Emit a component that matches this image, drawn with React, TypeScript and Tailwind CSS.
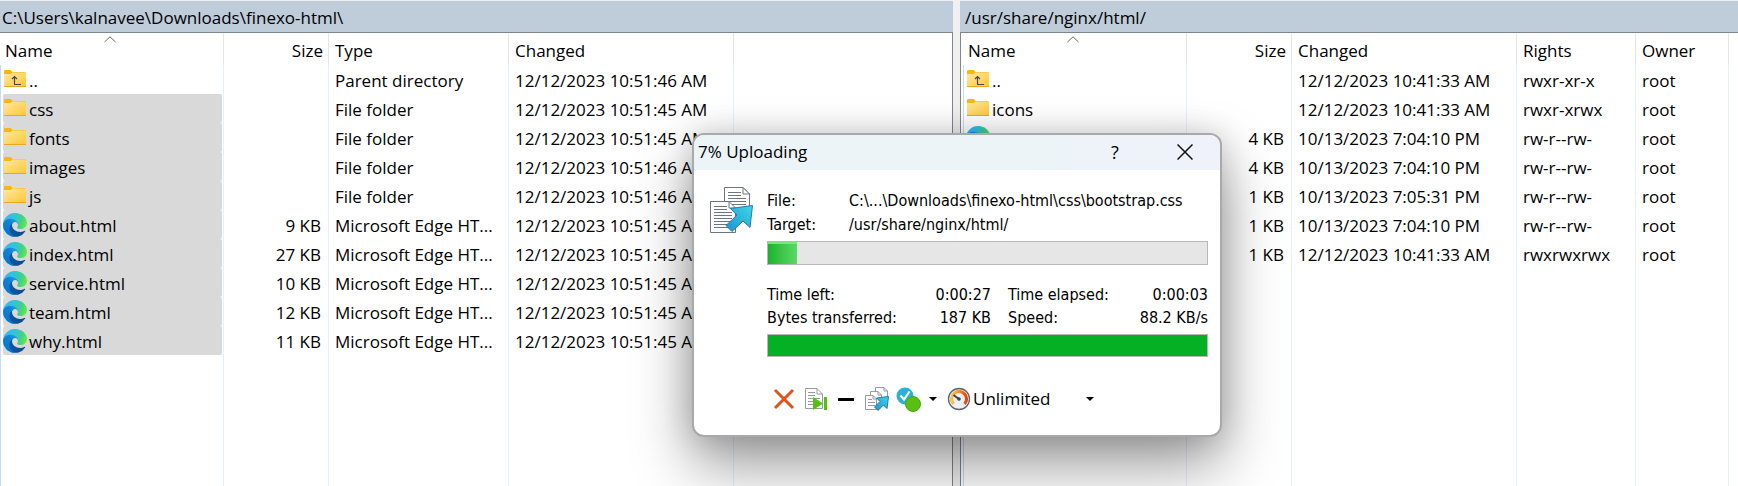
import React from "react";

type Kind = "up" | "folder" | "edge";
type Row = { kind?: Kind; name: string; selected?: boolean; cells: string[] };
type Column = { label: string; width: string; right?: boolean; sorted?: boolean };

const localColumns: Column[] = [
  { label: "Name", width: "w-[224px]", sorted: true },
  { label: "Size", width: "w-[105px]", right: true },
  { label: "Type", width: "w-[180px]" },
  { label: "Changed", width: "w-[225px]" },
];

const remoteColumns: Column[] = [
  { label: "Name", width: "w-[224px]", sorted: true },
  { label: "Size", width: "w-[105px]", right: true },
  { label: "Changed", width: "w-[225px]" },
  { label: "Rights", width: "w-[119px]" },
  { label: "Owner", width: "w-[93px]" },
];

const localRows: Row[] = [
  { kind: "up", name: "..", cells: ["", "Parent directory", "12/12/2023 10:51:46 AM"] },
  { kind: "folder", name: "css", selected: true, cells: ["", "File folder", "12/12/2023 10:51:45 AM"] },
  { kind: "folder", name: "fonts", selected: true, cells: ["", "File folder", "12/12/2023 10:51:45 AM"] },
  { kind: "folder", name: "images", selected: true, cells: ["", "File folder", "12/12/2023 10:51:46 AM"] },
  { kind: "folder", name: "js", selected: true, cells: ["", "File folder", "12/12/2023 10:51:46 AM"] },
  { kind: "edge", name: "about.html", selected: true, cells: ["9 KB", "Microsoft Edge HT...", "12/12/2023 10:51:45 AM"] },
  { kind: "edge", name: "index.html", selected: true, cells: ["27 KB", "Microsoft Edge HT...", "12/12/2023 10:51:45 AM"] },
  { kind: "edge", name: "service.html", selected: true, cells: ["10 KB", "Microsoft Edge HT...", "12/12/2023 10:51:45 AM"] },
  { kind: "edge", name: "team.html", selected: true, cells: ["12 KB", "Microsoft Edge HT...", "12/12/2023 10:51:45 AM"] },
  { kind: "edge", name: "why.html", selected: true, cells: ["11 KB", "Microsoft Edge HT...", "12/12/2023 10:51:45 AM"] },
];

const remoteRows: Row[] = [
  { kind: "up", name: "..", cells: ["", "12/12/2023 10:41:33 AM", "rwxr-xr-x", "root"] },
  { kind: "folder", name: "icons", cells: ["", "12/12/2023 10:41:33 AM", "rwxr-xrwx", "root"] },
  { kind: "edge", name: "50x.html", cells: ["4 KB", "10/13/2023 7:04:10 PM", "rw-r--rw-", "root"] },
  { name: "", cells: ["4 KB", "10/13/2023 7:04:10 PM", "rw-r--rw-", "root"] },
  { name: "", cells: ["1 KB", "10/13/2023 7:05:31 PM", "rw-r--rw-", "root"] },
  { name: "", cells: ["1 KB", "10/13/2023 7:04:10 PM", "rw-r--rw-", "root"] },
  { name: "", cells: ["1 KB", "12/12/2023 10:41:33 AM", "rwxrwxrwx", "root"] },
];

function Gradients() {
  return (
    <svg width="0" height="0" className="absolute" aria-hidden="true">
      <defs>
        <linearGradient id="folder" x1="0" y1="0" x2="1" y2="1">
          <stop offset="0" stopColor="#ffe9a6" />
          <stop offset="1" stopColor="#ffc62f" />
        </linearGradient>
        <linearGradient id="edgeDeep" x1="58" y1="177" x2="236" y2="177" gradientUnits="userSpaceOnUse">
          <stop offset="0" stopColor="#0c59a4" />
          <stop offset="1" stopColor="#114a8b" />
        </linearGradient>
        <linearGradient id="edgeBlue" x1="157" y1="94" x2="46" y2="222" gradientUnits="userSpaceOnUse">
          <stop offset="0" stopColor="#1b9de2" />
          <stop offset="0.3" stopColor="#1384d6" />
          <stop offset="1" stopColor="#0078d4" />
        </linearGradient>
        <linearGradient id="edgeTop" x1="20" y1="60" x2="250" y2="130" gradientUnits="userSpaceOnUse">
          <stop offset="0" stopColor="#35b8f0" />
          <stop offset="0.4" stopColor="#2fc5d8" />
          <stop offset="0.75" stopColor="#43d088" />
          <stop offset="1" stopColor="#66eb3c" />
        </linearGradient>
        <linearGradient id="arrow" x1="1" y1="0" x2="0" y2="1">
          <stop offset="0" stopColor="#3fd6e4" />
          <stop offset="1" stopColor="#1f93d2" />
        </linearGradient>
        <linearGradient id="dial" x1="0" y1="0" x2="1" y2="0">
          <stop offset="0" stopColor="#fdc34a" />
          <stop offset="0.5" stopColor="#f5922c" />
          <stop offset="1" stopColor="#e2470f" />
        </linearGradient>
      </defs>
    </svg>
  );
}

function FolderIcon({ up = false }: { up?: boolean }) {
  return (
    <svg width="24" height="24" viewBox="0 0 24 24" className="shrink-0" aria-hidden="true">
      <path d="M1 3.5C1 2.7 1.6 2 2.4 2H7.6L9.6 4H22.5V6H1Z" fill="#fbb615" />
      <path d="M1 6H7.6L9.6 4.6H23V19H1Z" fill="url(#folder)" />
      <path d="M1 18.5H23" stroke="#eba81c" />
      {up && <path d="M11.5 16.5V9M9 11L11.5 8.5L14 11M11 16.5H18" fill="none" stroke="#4a4a4a" strokeWidth="1.2" />}
    </svg>
  );
}

function EdgeIcon() {
  return (
    <svg width="24" height="24" viewBox="0 0 256 256" className="shrink-0" aria-hidden="true">
      <g transform="translate(-4.63 -4.92)">
        <path fill="url(#edgeDeep)" d="M235.68 195.46a93.73 93.73 0 0 1-10.54 4.71 101.87 101.87 0 0 1-35.9 6.46c-47.32 0-88.54-32.55-88.54-74.32A31.48 31.48 0 0 1 117.13 105c-42.8 1.8-53.8 46.4-53.8 72.53 0 73.88 68.09 81.37 82.76 81.37 7.91 0 19.84-2.3 27-4.56l1.31-.44a128.34 128.34 0 0 0 66.6-52.8 4 4 0 0 0-5.32-5.64z" />
        <path fill="url(#edgeBlue)" d="M110.34 246.34A79.2 79.2 0 0 1 87.6 225a80.72 80.72 0 0 1 29.53-120c3.12-1.47 8.45-4.13 15.54-4a32.35 32.35 0 0 1 25.69 13 31.88 31.88 0 0 1 6.36 18.66c0-.21 24.46-79.6-80-79.6-43.9 0-80 41.66-80 78.21a130.15 130.15 0 0 0 12.11 56 128 128 0 0 0 156.38 67.11 75.55 75.55 0 0 1-62.78-8z" />
        <path fill="url(#edgeTop)" d="M156.94 153.78c-.81 1.05-3.3 2.5-3.3 5.66 0 2.61 1.7 5.12 4.72 7.23 14.38 10 41.49 8.68 41.56 8.68a59.56 59.56 0 0 0 30.27-8.35 61.38 61.38 0 0 0 30.43-52.88c.26-22.41-8-37.31-11.34-43.91C228.09 28.76 182.35 4.92 132.61 4.92a128 128 0 0 0-128 126.2c.48-36.54 36.8-66.05 80-66.05 3.5 0 23.46.34 42 10.07 16.34 8.58 24.9 18.94 30.85 29.21 6.18 10.67 7.28 24.15 7.28 29.52s-2.74 13.33-7.8 19.91z" />
      </g>
    </svg>
  );
}

function RowIcon({ kind }: { kind: Kind }) {
  if (kind === "edge") return <EdgeIcon />;
  return <FolderIcon up={kind === "up"} />;
}

function FileTable({ label, columns, rows }: { label: string; columns: Column[]; rows: Row[] }) {
  return (
    <table aria-label={label} className="h-full w-full table-fixed border-separate border-spacing-0 whitespace-nowrap">
      <thead>
        <tr className="h-8">
          {columns.map((c) => (
            <th key={c.label} className={`relative h-8 border-t border-r border-t-white border-r-[#e5e5e5] p-0 font-normal ${c.width}`}>
              {c.sorted && (
                <svg width="12" height="7" viewBox="0 0 12 7" className="absolute top-0.5 left-1/2 -ml-2" aria-hidden="true">
                  <path d="M0.5 6L6 0.8L11.5 6" fill="none" stroke="#6a6a6a" />
                </svg>
              )}
              <button type="button" className={`block w-full pt-0.5 leading-6 ${c.right ? "pr-[5px] text-right" : c.sorted ? "pl-[5px] text-left" : "pl-1.5 text-left"}`}>
                {c.label}
              </button>
            </th>
          ))}
          <td />
        </tr>
      </thead>
      <tbody>
        {rows.map((r, i) => (
          <tr key={i} className="h-[29px]">
            <td className="h-[29px] border-r border-l border-r-[#e6f0fc] border-l-[#c5dcf8] py-0 pr-px pl-0.5">
              <div className={`flex h-[29px] items-center gap-0.5 rounded-xs ${r.selected ? "bg-[#d9d9d9]" : ""}`}>
                {r.kind && <RowIcon kind={r.kind} />}
                <span className="pt-0.5">{r.name}</span>
              </div>
            </td>
            {r.cells.map((text, j) => (
              <td key={j} className={`overflow-hidden border-r border-[#e6f0fc] pt-0.5 pb-0 ${columns[j + 1].right ? "pr-[7px] text-right" : "pl-1.5"}`}>
                {text}
              </td>
            ))}
            <td />
          </tr>
        ))}
        <tr aria-hidden="true">
          {columns.map((c, i) => (
            <td key={c.label} className={i === 0 ? "border-r border-l border-r-[#e6f0fc] border-l-[#c5dcf8]" : "border-r border-[#e6f0fc]"} />
          ))}
          <td />
        </tr>
      </tbody>
    </table>
  );
}

function CopyIcon({ large = false }: { large?: boolean }) {
  if (large) {
    return (
      <svg width="44" height="48" viewBox="0 0 44 48" aria-hidden="true">
        <path d="M14.5 0.5H33L39.5 7V32.5H14.5Z" fill="#fff" stroke="#6d7680" />
        <path d="M33 0.5V7H39.5Z" fill="#fff" stroke="#6d7680" />
        <path d="M18 5.5H31M18 8.5H31M18 11.5H36M18 14.5H36M18 17.5H36" stroke="#6d7680" />
        <path d="M0.5 14.5H19L25.5 21V45.5H0.5Z" fill="#fff" stroke="#6d7680" />
        <path d="M19 14.5V21H25.5" fill="none" stroke="#6d7680" />
        <path d="M4 19.5H17M4 22.5H17M4 25.5H22M4 28.5H22M4 31.5H22M4 34.5H22M4 37.5H22M4 40.5H22" stroke="#6d7680" />
        <path d="M42.5 18.5L20.5 21.5L27 28L16 38.5L22 44.5L33 34L40 40.5Z" fill="url(#arrow)" stroke="#2479b8" />
      </svg>
    );
  }
  return (
    <svg width="24" height="24" viewBox="0 0 24 24" aria-hidden="true">
      <path d="M10.5 0.5H19L22.5 4V14.5H10.5Z" fill="#fff" stroke="#959ba1" />
      <path d="M19 0.5V4H22.5" fill="none" stroke="#959ba1" />
      <path d="M5.5 4.5H13L16.5 8V18.5H5.5Z" fill="#fff" stroke="#959ba1" />
      <path d="M0.5 8.5H8L11.5 12V22.5H0.5Z" fill="#fff" stroke="#959ba1" />
      <path d="M13 4.5V8H16.5M8 8.5V12H11.5M3 12.5H7M3 15.5H10M3 18.5H10" fill="none" stroke="#959ba1" />
      <path d="M23.5 9.5L11.5 11L15 14.5L9.5 20L13 23.5L18.5 18L22 21.5Z" fill="url(#arrow)" stroke="#2479b8" />
    </svg>
  );
}

function Caret() {
  return (
    <svg width="8" height="4" viewBox="0 0 8 4" aria-hidden="true">
      <path d="M0 0H8L4 4Z" fill="#000" />
    </svg>
  );
}

function Stat({ label, value }: { label: string; value: string }) {
  return (
    <div className="flex justify-between">
      <dt>{label}</dt>
      <dd>{value}</dd>
    </div>
  );
}

function UploadDialog() {
  return (
    <section
      role="dialog"
      aria-labelledby="upload-title"
      className="absolute top-[133px] left-[692px] w-[530px] overflow-hidden rounded-xl border-2 border-[#a9a9a9] bg-white shadow-[0_28px_60px_rgba(0,0,0,0.4),0_0_30px_rgba(0,0,0,0.16)]"
    >
      <header className="flex h-[35px] items-center bg-linear-to-r from-[#ecf4f7] from-60% to-[#eff2fb] pb-0.5 pl-1">
        <h1 id="upload-title" className="flex-1 leading-6">7% Uploading</h1>
        <button type="button" aria-label="Help" className="w-[70px] text-center text-lg leading-6">?</button>
        <button type="button" aria-label="Close" className="flex w-[70px] justify-center">
          <svg width="16" height="16" viewBox="0 0 16 16" aria-hidden="true">
            <path d="M0.5 0.5L15.5 15.5M15.5 0.5L0.5 15.5" stroke="#111" strokeWidth="1.5" />
          </svg>
        </button>
      </header>
      <div className="flex h-[265px] pt-[17px] pr-3 pl-4">
        <div className="w-[57px] shrink-0">
          <CopyIcon large />
        </div>
        <div className="min-w-0 flex-1">
          <div className="font-['DejaVu_Sans_Condensed','Noto_Sans',sans-serif] text-[16px] leading-6">
            <dl className="grid grid-cols-[82px_1fr] pt-0.5">
              <dt>File:</dt>
              <dd className="whitespace-nowrap">C:\...\Downloads\finexo-html\css\bootstrap.css</dd>
              <dt>Target:</dt>
              <dd>/usr/share/nginx/html/</dd>
            </dl>
            <div role="progressbar" aria-label="File progress" aria-valuenow={7} className="mt-1 h-6 border border-[#b8b8b8] bg-[#e6e6e6]">
              <div className="h-full w-[29px] border-t-2 border-[#7be482] bg-linear-to-r from-[#12b52b] to-[#5bd866]" />
            </div>
            <dl className="mt-[18px] grid grid-cols-[224px_200px] justify-between leading-[23px]">
              <Stat label="Time left:" value="0:00:27" />
              <Stat label="Time elapsed:" value="0:00:03" />
              <Stat label="Bytes transferred:" value="187 KB" />
              <Stat label="Speed:" value="88.2 KB/s" />
            </dl>
            <div role="progressbar" aria-label="Total progress" aria-valuenow={100} className="mt-[5px] h-[23px] border border-[#b8b8b8] bg-[#06b025]" />
          </div>
          <div className="mt-7 flex h-7 items-center pl-1.5">
            <button type="button" aria-label="Cancel" className="w-8">
              <svg width="22" height="22" viewBox="0 0 22 22" aria-hidden="true">
                <path d="M2 2L20 20M20 2L2 20" stroke="#e2501c" strokeWidth="3" />
              </svg>
            </button>
            <button type="button" aria-label="Skip file" className="w-8">
              <svg width="24" height="24" viewBox="0 0 24 24" aria-hidden="true">
                <path d="M0.5 1.5H12L17.5 7V21.5H0.5Z" fill="#fff" stroke="#959ba1" />
                <path d="M12 1.5V7H17.5M3 5.5H10M3 8.5H10M3 11.5H15M3 14.5H9M3 17.5H9" fill="none" stroke="#959ba1" />
                <path d="M8 10L18 16.5L8 23Z" fill="#55c010" />
                <path d="M19 10H22V23H19Z" fill="#55c010" />
              </svg>
            </button>
            <button type="button" aria-label="Minimize" className="flex w-7 items-center">
              <span className="ml-px h-[3px] w-4 bg-black" />
            </button>
            <button type="button" aria-label="Move to background" className="w-[31px]">
              <CopyIcon />
            </button>
            <button type="button" aria-label="When finished" className="flex w-[51px] items-center gap-2">
              <svg width="25" height="25" viewBox="0 0 25 25" aria-hidden="true">
                <circle cx="9" cy="9" r="8.5" fill="#2bb0d8" />
                <path d="M4.5 8.5L8 12.5L13.5 4.5" fill="none" stroke="#fff" strokeWidth="2.2" />
                <circle cx="17" cy="17" r="7.5" fill="#5abf12" stroke="#48a80c" />
              </svg>
              <Caret />
            </button>
            <label htmlFor="speed-limit" aria-label="Speed limit" className="shrink-0">
              <svg width="24" height="24" viewBox="0 0 24 24" aria-hidden="true">
                <circle cx="12" cy="12" r="10.5" fill="#eef0f3" stroke="#5d646c" strokeWidth="1.3" />
                <path d="M6.5 17A7.5 7.5 0 1 1 17.5 17" fill="none" stroke="url(#dial)" strokeWidth="3.2" />
                <path d="M12.5 12.5L6.5 8" stroke="#3c434a" strokeWidth="2" />
                <circle cx="12" cy="12" r="1.8" fill="#3c434a" />
              </svg>
            </label>
            <div className="relative ml-0.5 w-[121px]">
              <select id="speed-limit" className="w-full appearance-none bg-transparent p-0 leading-6">
                <option>Unlimited</option>
              </select>
              <span className="pointer-events-none absolute inset-y-0 right-0 flex items-center">
                <Caret />
              </span>
            </div>
          </div>
        </div>
      </div>
    </section>
  );
}

export default function App() {
  return (
    <main className="relative grid h-screen min-h-[480px] grid-cols-[953fr_7px_778fr] overflow-hidden bg-[#f0f0f0] pt-px font-['Open_Sans','Noto_Sans',sans-serif] text-[17px] leading-6 text-black">
      <Gradients />
      <section className="flex min-w-0 flex-col overflow-hidden">
        <h2 className="h-[31px] shrink-0 bg-[#bfccda] pt-[5px] pl-0.5">C:\Users\kalnavee\Downloads\finexo-html\</h2>
        <div className="min-h-0 flex-1 border-t border-r border-[#7f858f] bg-white">
          <FileTable label="Local files" columns={localColumns} rows={localRows} />
        </div>
      </section>
      <div />
      <section className="flex min-w-0 flex-col overflow-hidden">
        <h2 className="h-[31px] shrink-0 bg-[#bfccda] pt-[5px] pl-[5px]">/usr/share/nginx/html/</h2>
        <div className="min-h-0 flex-1 border-t border-l border-[#7f858f] bg-white pl-0.5">
          <FileTable label="Remote files" columns={remoteColumns} rows={remoteRows} />
        </div>
      </section>
      <UploadDialog />
    </main>
  );
}
